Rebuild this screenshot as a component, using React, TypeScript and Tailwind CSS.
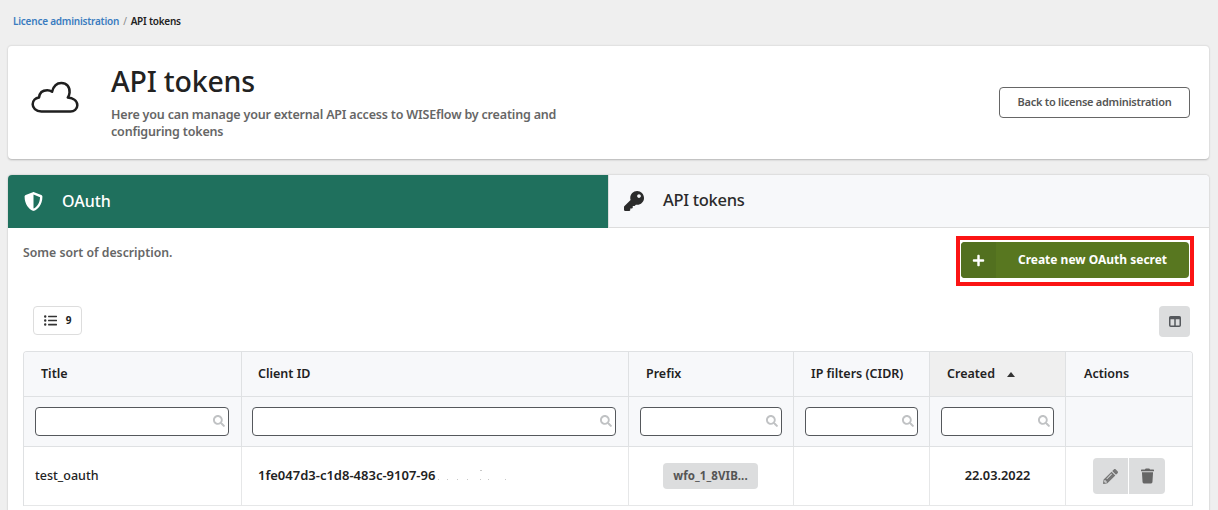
import React from "react";
import { FaShieldAlt, FaKey, FaPlus, FaListUl, FaSearch, FaPencilAlt, FaTrash } from "react-icons/fa";

function Filter({ w }: { w: string }) {
  return (
    <div className={`relative h-[29px] rounded-[4px] border border-[#55585c] bg-white ${w}`}>
      <FaSearch className="absolute right-[3px] top-[7px] h-[12px] w-[12px] text-[#c0c2c4]" />
    </div>
  );
}

function Cloud() {
  return (
    <svg width="52" height="33" viewBox="0 0 50 34" fill="none" stroke="#1f1f1f" strokeWidth="2.6" strokeLinejoin="round">
      <path d="M11 31.5 C5 31.5 2 27.5 2 24 C2 20 5 17.5 8.5 17 C9 12.5 12 9.5 17 9.5 C19 9.5 20.5 10 22 11 C23.5 5 27.5 2 31.5 2 C37 2 40.5 6 40 12 C39.8 14 39 16 38.2 17 C43 17.5 48 20 48 25 C48 29 44.5 31.5 41 31.5 Z" />
    </svg>
  );
}

function ColumnsIcon() {
  return (
    <svg width="12" height="11" viewBox="0 0 12 11" fill="none">
      <rect x="0.75" y="0.75" width="10.5" height="9.5" rx="1" stroke="#55585c" strokeWidth="1.5" />
      <rect x="0.75" y="0.75" width="10.5" height="2.5" fill="#55585c" />
      <path d="M6 1V10" stroke="#55585c" strokeWidth="1.5" />
    </svg>
  );
}

export default function App() {
  return (
    <div className="h-[510px] w-[1218px] overflow-hidden bg-[#efefef] font-['Noto_Sans',sans-serif] text-[#222]">
      <div className="flex h-[45px] items-start pl-[13px] pt-[14px] text-[10px] leading-[14px] font-semibold tracking-[-0.23px]">
        <span className="text-[#3a7cc0]">Licence administration</span>
        <span className="mx-[4px] font-normal text-[#888]">/</span>
        <span className="text-[#222]">API tokens</span>
      </div>

      <div className="mx-[8px] flex h-[114px] w-[1201px] items-center rounded-[4px] border-t border-t-[#e2e2e2] bg-white pl-[21px] pr-[19px] shadow-[0_1px_2px_rgba(0,0,0,0.25)]">
        <div className="w-[82px] pb-[11px]"><Cloud /></div>
        <div className="flex-1">
          <h1 className="-mt-[2px] text-[28.5px] leading-[34px] font-medium tracking-[-0.2px] text-[#222]">API tokens</h1>
          <p className="mt-[8px] w-[460px] text-[12.5px] leading-[17px] font-semibold tracking-[-0.18px] text-[#666]">
            Here you can manage your external API access to WISEflow by creating and configuring tokens
          </p>
        </div>
        <div className="flex h-[31px] w-[191px] items-center justify-center rounded-[4px] border border-[#666] bg-white text-[11px] font-semibold tracking-[-0.27px] text-[#555]">
          Back to license administration
        </div>
      </div>

      <div className="mx-[8px] mt-[16px] h-[400px] w-[1201px] rounded-t-[4px] bg-white shadow-[0_0_2px_rgba(0,0,0,0.25)]">
        <div className="flex h-[53px]">
          <div className="flex w-[600px] items-center rounded-tl-[4px] bg-[#1f705d] pl-[16px] text-white">
            <FaShieldAlt className="h-[19px] w-[19px]" />
            <span className="ml-[19px] pb-[1px] text-[16px] font-medium">OAuth</span>
          </div>
          <div className="flex flex-1 items-center rounded-tr-[4px] border-b border-l border-[#ddd] bg-[#f7f8fa] pl-[15px] text-[#2b2b2b]">
            <FaKey className="h-[20px] w-[20px]" />
            <span className="ml-[19px] pb-[2px] text-[16.5px] font-medium tracking-[-0.3px]">API tokens</span>
          </div>
        </div>

        <div className="flex items-start justify-between px-[15px] pt-[8px]">
          <p className="pt-[8px] text-[12.25px] leading-[18px] font-semibold text-[#666]">Some sort of description.</p>
          <div className="border-[4px] border-[#fb1414] px-[1px] pt-[2px] pb-[4px]">
            <div className="flex h-[36px] w-[228px] overflow-hidden rounded-[4px] bg-[#587720] text-white">
              <div className="flex w-[35px] items-center justify-center bg-[#52701f]">
                <FaPlus className="h-[13px] w-[13px]" />
              </div>
              <div className="flex flex-1 items-center justify-center text-[12px] font-bold">Create new OAuth secret</div>
            </div>
          </div>
        </div>

        <div className="flex items-start justify-between pl-[25px] pr-[19px] pt-[20px]">
          <div className="flex h-[29px] w-[49px] items-center justify-center gap-[9px] rounded-[4px] border border-[#ddd] bg-white text-[10px] font-bold">
            <FaListUl className="h-[13px] w-[13px] text-[#333]" />
            <span>9</span>
          </div>
          <div className="flex h-[31px] w-[31px] items-center justify-center rounded-[4px] bg-[#dcddde]">
            <ColumnsIcon />
          </div>
        </div>

        <div className="ml-[15px] mt-[14px] w-[1170px] overflow-hidden rounded-t-[4px] border border-b-0 border-[#dfe1e3]">
          <div className="grid grid-cols-[218px_387px_165px_136px_136px_1fr]">
            <div className="flex h-[45px] items-center border-b border-r border-[#dfe1e3] bg-[#f7f8fa] pl-[17px] text-[12.5px] font-semibold text-[#222]">Title</div>
            <div className="flex h-[45px] items-center border-b border-r border-[#dfe1e3] bg-[#f7f8fa] pl-[16px] text-[12.5px] font-semibold text-[#222]">Client ID</div>
            <div className="flex h-[45px] items-center border-b border-r border-[#dfe1e3] bg-[#f7f8fa] pl-[17px] text-[12.5px] font-semibold text-[#222]">Prefix</div>
            <div className="flex h-[45px] items-center border-b border-r border-[#dfe1e3] bg-[#f7f8fa] pl-[17px] text-[12.5px] font-semibold text-[#222]">IP filters (CIDR)</div>
            <div className="flex h-[45px] items-center border-b border-r border-[#dfe1e3] bg-[#efefef] pl-[17px] text-[12.5px] font-semibold">
              Created
              <span className="ml-[12px] h-0 w-0 border-x-[4px] border-b-[5px] border-x-transparent border-b-[#333]" />
            </div>
            <div className="flex h-[45px] items-center border-b border-[#dfe1e3] bg-[#f7f8fa] pl-[18px] text-[12.5px] font-semibold">Actions</div>

            <div className="flex h-[50px] items-center border-b border-r border-[#dfe1e3] bg-[#f7f8fa] pl-[11px]"><Filter w="w-[194px]" /></div>
            <div className="flex h-[50px] items-center border-b border-r border-[#dfe1e3] bg-[#f7f8fa] pl-[10px]"><Filter w="w-[364px]" /></div>
            <div className="flex h-[50px] items-center border-b border-r border-[#dfe1e3] bg-[#f7f8fa] pl-[11px]"><Filter w="w-[142px]" /></div>
            <div className="flex h-[50px] items-center border-b border-r border-[#dfe1e3] bg-[#f7f8fa] pl-[11px]"><Filter w="w-[113px]" /></div>
            <div className="flex h-[50px] items-center border-b border-r border-[#dfe1e3] bg-[#f7f8fa] pl-[11px]"><Filter w="w-[113px]" /></div>
            <div className="h-[50px] border-b border-[#dfe1e3] bg-[#f7f8fa]" />

            <div className="flex h-[59px] items-center border-b border-r border-[#e6e7e8] pl-[11px] text-[12.5px] font-medium">test_oauth</div>
            <div className="flex h-[59px] items-center border-b border-r border-[#e6e7e8] pl-[16px] text-[13px] font-semibold">
              1fe047d3-c1d8-483c-9107-96
              <svg width="70" height="14" className="ml-[2px]" fill="#c8c8c8">
                <rect x="1" y="10" width="1" height="1" /><rect x="10" y="10" width="1" height="1" /><rect x="20" y="10" width="1" height="1" /><rect x="30" y="10" width="1" height="1" /><rect x="43" y="10" width="1" height="1" /><rect x="51" y="10" width="1" height="1" /><rect x="68" y="10" width="1" height="1" /><rect x="43" y="1" width="2" height="1" />
              </svg>
            </div>
            <div className="flex h-[59px] items-center border-b border-r border-[#e6e7e8] pl-[34px]">
              <div className="flex h-[26px] w-[95px] items-center justify-center rounded-[4px] bg-[#dcddde] text-[11.5px] font-bold tracking-[0.1px] text-[#555]">wfo_1_8VIB...</div>
            </div>
            <div className="h-[59px] border-b border-r border-[#e6e7e8]" />
            <div className="flex h-[59px] items-center justify-center border-b border-r border-[#e6e7e8] text-[12.8px] font-semibold">22.03.2022</div>
            <div className="flex h-[59px] items-center border-b border-[#e6e7e8] pl-[27px]">
              <div className="flex h-[36px] w-[72px] overflow-hidden rounded-[4px]">
                <div className="flex w-[36px] items-center justify-center border-r border-white bg-[#dcddde]">
                  <FaPencilAlt className="h-[15px] w-[15px] text-[#777]" />
                </div>
                <div className="flex w-[36px] items-center justify-center bg-[#dcddde]">
                  <FaTrash className="h-[16px] w-[13px] text-[#666]" />
                </div>
              </div>
            </div>
          </div>
        </div>
      </div>
    </div>
  );
}
